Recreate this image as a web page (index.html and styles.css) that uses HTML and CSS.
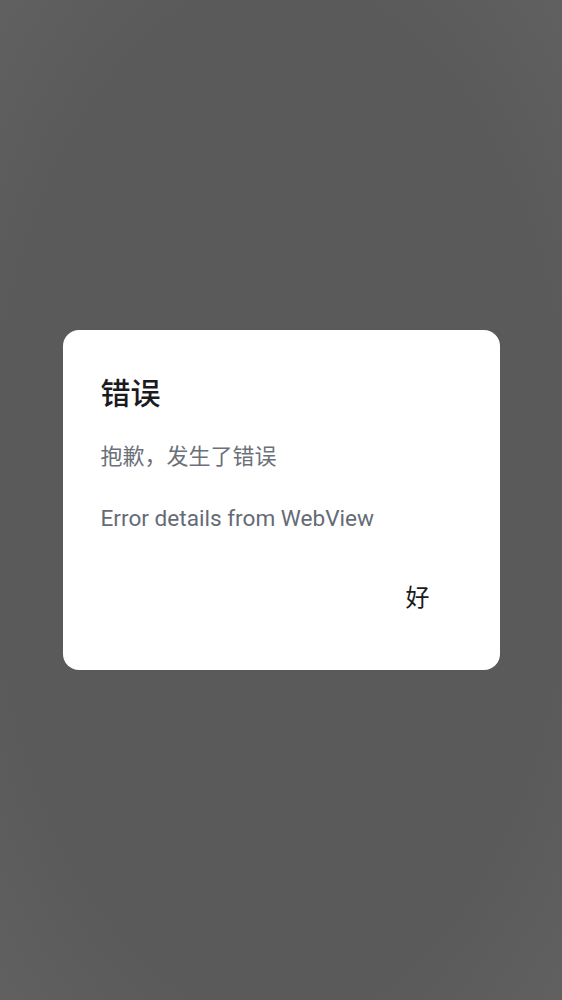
FILE: index.html
```html
<!DOCTYPE html>
<html lang="zh-CN">
<head>
<meta charset="utf-8">
<link rel="stylesheet" href="styles.css">
</head>
<body>
<div class="overlay">
  <div class="dialog">
    <h1 class="title">错误</h1>
    <p class="message">抱歉，发生了错误</p>
    <p class="details">Error details from WebView</p>
    <div class="actions">
      <button class="ok">好</button>
    </div>
  </div>
</div>
</body>
</html>
```

FILE: styles.css
```css
html, body {
  margin: 0;
  padding: 0;
  height: 100%;
}
body {
  font-family: Roboto, "Noto Sans CJK SC", sans-serif;
  background: #5b5b5b;
}
.overlay {
  height: 100%;
  display: flex;
  align-items: center;
  justify-content: center;
  background: radial-gradient(ellipse at center, #5a5a5a 70%, #606060 100%);
}
.dialog {
  width: 437px;
  box-sizing: border-box;
  background: #ffffff;
  border-radius: 16px;
  padding: 40px 38px 42px 38px;
  display: flex;
  flex-direction: column;
}
.title {
  margin: 0;
  font-size: 30px;
  font-weight: 500;
  line-height: 48px;
  color: #1b1b1f;
}
.message {
  margin: 23px 0 0 0;
  font-size: 22px;
  line-height: 32px;
  color: #6b7079;
}
.details {
  margin: 30px 0 0 0;
  font-size: 22.6px;
  line-height: 32px;
  color: #656b76;
}
.actions {
  display: flex;
  justify-content: flex-end;
  margin-top: 33px;
}
.ok {
  border: none;
  background: none;
  font-family: Roboto, "Noto Sans CJK SC", sans-serif;
  font-size: 24px;
  color: #1b1b1f;
  padding: 14px 32px;
  line-height: 32px;
}
```
